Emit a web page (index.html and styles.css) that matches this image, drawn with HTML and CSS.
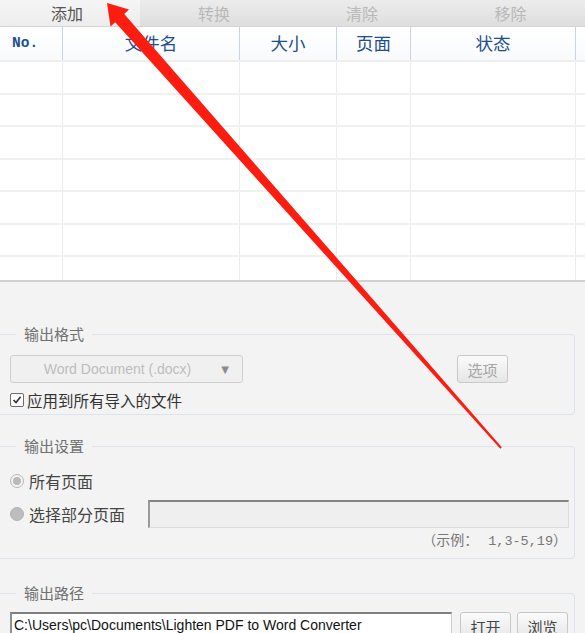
FILE: index.html
```html
<!DOCTYPE html>
<html lang="zh-CN">
<head>
<meta charset="utf-8">
<title>Lighten PDF to Word Converter</title>
<link rel="stylesheet" href="styles.css">
</head>
<body>
<div class="app">
  <div class="toolbar">
    <div class="tab tab-add">添加</div>
    <div class="tab tab-off">转换</div>
    <div class="tab tab-off">清除</div>
    <div class="tab tab-off">移除</div>
  </div>

  <div class="table">
    <div class="row head">
      <div class="c c-no">No.</div>
      <div class="c">文件名</div>
      <div class="c">大小</div>
      <div class="c">页面</div>
      <div class="c">状态</div>
      <div class="c c-end"></div>
    </div>
    <div class="row body"><div class="c"></div><div class="c"></div><div class="c"></div><div class="c"></div><div class="c"></div><div class="c c-end"></div></div>
    <div class="row body"><div class="c"></div><div class="c"></div><div class="c"></div><div class="c"></div><div class="c"></div><div class="c c-end"></div></div>
    <div class="row body"><div class="c"></div><div class="c"></div><div class="c"></div><div class="c"></div><div class="c"></div><div class="c c-end"></div></div>
    <div class="row body"><div class="c"></div><div class="c"></div><div class="c"></div><div class="c"></div><div class="c"></div><div class="c c-end"></div></div>
    <div class="row body"><div class="c"></div><div class="c"></div><div class="c"></div><div class="c"></div><div class="c"></div><div class="c c-end"></div></div>
    <div class="row body"><div class="c"></div><div class="c"></div><div class="c"></div><div class="c"></div><div class="c"></div><div class="c c-end"></div></div>
    <div class="row body last"><div class="c"></div><div class="c"></div><div class="c"></div><div class="c"></div><div class="c"></div><div class="c c-end"></div></div>
  </div>

  <div class="settings">
    <fieldset class="group g-format">
      <legend>输出格式</legend>
      <div class="line">
        <div class="combo"><span class="combo-text">Word Document (.docx)</span><span class="caret">▼</span></div>
        <div class="btn btn-off btn-opt">选项</div>
      </div>
      <div class="check-row">
        <span class="checkbox"><svg width="10" height="10" viewBox="0 0 10 10"><path d="M1.5 5 L4 7.6 L8.6 1.8" fill="none" stroke="#333" stroke-width="1.6"/></svg></span>
        <span>应用到所有导入的文件</span>
      </div>
    </fieldset>

    <fieldset class="group g-pages">
      <legend>输出设置</legend>
      <div class="radio-row r1">
        <span class="radio radio-on"><span class="dot"></span></span>
        <span>所有页面</span>
      </div>
      <div class="radio-row r2">
        <span class="radio radio-fill"></span>
        <span class="r2-label">选择部分页面</span>
        <div class="range-input"></div>
      </div>
      <div class="example"><span class="ex-cjk">（示例：</span><span class="ex-num">1,3-5,19</span><span class="ex-cjk">）</span></div>
    </fieldset>

    <fieldset class="group g-path">
      <legend>输出路径</legend>
      <div class="line path-line">
        <div class="path-input">C:\Users\pc\Documents\Lighten PDF to Word Converter</div>
        <div class="btn btn-open">打开</div>
        <div class="btn btn-browse">浏览</div>
      </div>
    </fieldset>
  </div>

  <svg class="arrow" width="585" height="633" viewBox="0 0 585 633">
    <polygon points="107,3 129,9.5 124.2,14 501.8,447.2 500.3,448.8 115.2,22.2 110.5,26.5" fill="#fc1c10"/>
  </svg>
</div>
</body>
</html>
```

FILE: styles.css
```css
html, body {
  margin: 0;
  padding: 0;
}
body {
  width: 585px;
  height: 633px;
  overflow: hidden;
  background: #f3f3f3;
  font-family: "Noto Sans CJK SC", "Microsoft YaHei", sans-serif;
  color: #333;
}
.app {
  position: relative;
  width: 585px;
  height: 633px;
  overflow: hidden;
}

/* toolbar */
.toolbar {
  display: flex;
  height: 27px;
  box-sizing: border-box;
  border-bottom: 1px solid #d4d4d4;
  background: linear-gradient(#ececec, #dedede);
}
.tab {
  display: flex;
  align-items: center;
  justify-content: center;
  font-size: 16px;
  line-height: 1;
}
.tab-add {
  width: 140px;
  background: linear-gradient(#f5f5f5, #ededed);
  color: #555;
  padding-right: 6px;
  box-sizing: border-box;
}
.tab-off {
  width: 148px;
  color: #b9b9b9;
}
.tab-off:last-child {
  flex: 1;
}

/* table */
.table {
  height: 255px;
  box-sizing: border-box;
  background: #fff;
  border-bottom: 2px solid #d0d0d0;
  display: flex;
  flex-direction: column;
}
.row {
  display: grid;
  grid-template-columns: 63px 177px 97px 74px 165px 1fr;
  box-sizing: border-box;
}
.row .c {
  border-right: 1px solid #ececec;
}
.row .c-end {
  border-right: none;
}
.head {
  height: 35px;
  border-bottom: 2px solid #eeeeee;
  background: linear-gradient(#ffffff, #f8fafc);
}
.head .c {
  border-right: 1px solid #c9d4e3;
  display: flex;
  align-items: center;
  justify-content: center;
  font-size: 17.5px;
  color: #1f4f8b;
  line-height: 1;
  padding-bottom: 1px;
}
.head .c-no {
  justify-content: flex-start;
  padding-left: 12px;
  font-family: "Liberation Mono", "DejaVu Sans Mono", monospace;
  font-size: 14.5px;
  font-weight: bold;
}
.head .c-end {
  border-right: none;
}
.body {
  height: 32.5px;
  border-bottom: 2px solid #f0f0f0;
}
.body.last {
  flex: 1;
  border-bottom: none;
}

/* settings */
.settings {
  display: flex;
  flex-direction: column;
}
.group {
  margin: 0 10px 0 -4px;
  padding: 0 0 0 13px;
  border: 1px solid #dce3ea;
  border-radius: 4px;
  min-width: 0;
}
.group legend {
  margin-left: 6px;
  padding: 0 8px;
  font-size: 15px;
  line-height: 20px;
  color: #707070;
}
.g-format {
  margin-top: 42px;
  padding-bottom: 6px;
}
.line {
  display: flex;
  align-items: center;
}
.g-format .line {
  margin-top: 11px;
}
.combo {
  width: 233px;
  height: 28px;
  box-sizing: border-box;
  border: 1px solid #cfcfcf;
  border-radius: 3px;
  background: #f0f0f0;
  display: flex;
  align-items: center;
  font-family: "Liberation Sans", Arial, sans-serif;
  font-size: 14px;
  color: #bdbdbd;
}
.combo-text {
  flex: 1;
  text-align: center;
  padding-left: 12px;
}
.caret {
  font-size: 10px;
  color: #8c8c8c;
  width: 26px;
  text-align: center;
  padding-right: 4px;
  font-family: "DejaVu Sans", sans-serif;
}
.btn {
  height: 28px;
  width: 51px;
  box-sizing: border-box;
  border: 1px solid #c8c8c8;
  border-radius: 3px;
  background: linear-gradient(#fbfbfb, #e6e6e6);
  display: flex;
  align-items: center;
  justify-content: center;
  font-size: 15px;
  color: #444;
}
.btn-off {
  color: #a5a5a5;
}
.btn-opt {
  margin-left: 214px;
}
.check-row {
  display: flex;
  align-items: center;
  margin-top: 9px;
  height: 16px;
  font-size: 15.5px;
  color: #333;
  line-height: 16px;
}
.checkbox {
  width: 12px;
  height: 12px;
  border: 1px solid #6b6b6b;
  border-radius: 2px;
  background: #fff;
  display: flex;
  align-items: center;
  justify-content: center;
  margin-right: 3px;
}

.g-pages {
  margin-top: 21px;
  padding-bottom: 11px;
  padding-right: 5px;
}
.radio-row {
  display: flex;
  align-items: center;
  font-size: 16px;
  color: #444;
}
.r1 {
  margin-top: 15px;
  height: 20px;
}
.r2 {
  margin-top: 9px;
  height: 28px;
}
.radio {
  width: 14px;
  height: 14px;
  box-sizing: border-box;
  border-radius: 50%;
  margin-right: 5px;
  flex: none;
}
.radio-on {
  border: 1px solid #b8b8b8;
  background: #f4f4f4;
  display: flex;
  align-items: center;
  justify-content: center;
}
.radio-on .dot {
  width: 8px;
  height: 8px;
  border-radius: 50%;
  background: #b9b9b9;
}
.radio-fill {
  background: #bdbdbd;
  border: 1px solid #b3b3b3;
}
.r2-label {
  width: 119px;
}
.range-input {
  flex: 1;
  height: 28px;
  box-sizing: border-box;
  border: 1px solid #dcdcdc;
  border-top: 2px solid #858585;
  border-left: 2px solid #9a9a9a;
  background: #efefef;
}
.example {
  margin-top: 3px;
  height: 16px;
  text-align: right;
  padding-right: 2px;
  font-size: 14px;
  line-height: 16px;
  color: #777;
  white-space: pre;
}
.ex-cjk {
  font-family: "Noto Sans CJK SC", sans-serif;
}
.ex-num {
  font-family: "Liberation Mono", "DejaVu Sans Mono", monospace;
  font-size: 13.5px;
  margin-left: 10px;
}

.g-path {
  margin-top: 24px;
  padding-right: 5px;
  padding-bottom: 10px;
}
.path-line {
  margin-top: 9px;
}
.path-input {
  width: 442px;
  height: 28px;
  box-sizing: border-box;
  border: 1px solid #cfcfcf;
  border-top: 2px solid #7f7f7f;
  border-left: 2px solid #8f8f8f;
  background: #fff;
  font-family: "Liberation Sans", Arial, sans-serif;
  font-size: 14px;
  line-height: 18px;
  color: #111;
  padding: 2px 0 0 2px;
  white-space: nowrap;
  overflow: hidden;
}
.btn-open {
  margin-left: 8px;
}
.btn-browse {
  margin-left: 6px;
}

/* annotation arrow overlay */
.arrow {
  position: absolute;
  left: 0;
  top: 0;
  pointer-events: none;
}
```
